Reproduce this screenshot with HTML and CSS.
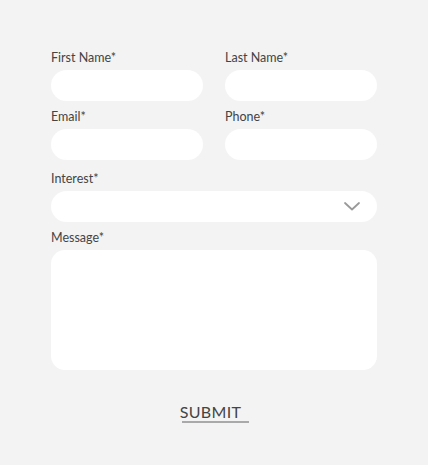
FILE: index.html
```
<!DOCTYPE html>
<html lang="en">
<head>
<meta charset="utf-8">
<title>Contact form</title>
<link rel="stylesheet" href="styles.css">
</head>
<body>
<form class="form">
  <div class="row">
    <div class="field">
      <label class="label">First Name*</label>
      <input class="input" type="text">
    </div>
    <div class="field">
      <label class="label">Last Name*</label>
      <input class="input" type="text">
    </div>
  </div>
  <div class="row">
    <div class="field">
      <label class="label">Email*</label>
      <input class="input" type="email">
    </div>
    <div class="field">
      <label class="label">Phone*</label>
      <input class="input" type="tel">
    </div>
  </div>
  <div class="field field-select">
    <label class="label">Interest*</label>
    <div class="select">
      <svg class="chevron" width="16" height="9" viewBox="0 0 16 9"><path d="M1 1 L8 7.5 L15 1" fill="none" stroke="#9a9a9a" stroke-width="1.8" stroke-linecap="round" stroke-linejoin="round"/></svg>
    </div>
  </div>
  <div class="field">
    <label class="label">Message*</label>
    <textarea class="textarea"></textarea>
  </div>
  <div class="actions">
    <button class="submit" type="button">SUBMIT</button>
  </div>
</form>
</body>
</html>
```
FILE: styles.css
```
html, body {
  margin: 0;
  padding: 0;
  background: #f3f3f3;
}
body {
  font-family: Lato, "Open Sans", sans-serif;
  color: #444;
}
.form {
  width: 326px;
  margin: 0 auto;
  padding-top: 46px;
  display: flex;
  flex-direction: column;
  gap: 4px;
}
.row {
  display: grid;
  grid-template-columns: 152px 152px;
  column-gap: 22px;
}
.field {
  display: flex;
  flex-direction: column;
}
.field-select {
  margin-top: 3px;
}
.label {
  font-size: 12.5px;
  line-height: 18px;
  height: 18px;
  padding-top: 3px;
  margin-bottom: 3px;
  color: #444;
}
.input, .select, .textarea {
  box-sizing: border-box;
  border: none;
  background: #fff;
  outline: none;
  margin: 0;
  font: inherit;
}
.input {
  height: 31px;
  border-radius: 16px;
  width: 100%;
}
.select {
  height: 31px;
  border-radius: 16px;
  display: flex;
  align-items: center;
  justify-content: flex-end;
  padding-right: 17px;
}
.chevron {
  display: block;
}
.textarea {
  height: 120px;
  border-radius: 14px;
  resize: none;
  display: block;
  width: 100%;
}
.actions {
  display: flex;
  justify-content: center;
  margin-top: 28px;
}
.submit {
  position: relative;
  background: none;
  border: none;
  padding: 0 8px 1px 0;
  margin-left: 1px;
  font-family: Lato, "Open Sans", sans-serif;
  font-size: 16px;
  line-height: 20px;
  color: #444;
  letter-spacing: 0.3px;
  cursor: pointer;
}
.submit::after {
  content: "";
  position: absolute;
  left: 2px;
  right: 0;
  bottom: 0;
  height: 2px;
  background: #a9a9a9;
}
```
